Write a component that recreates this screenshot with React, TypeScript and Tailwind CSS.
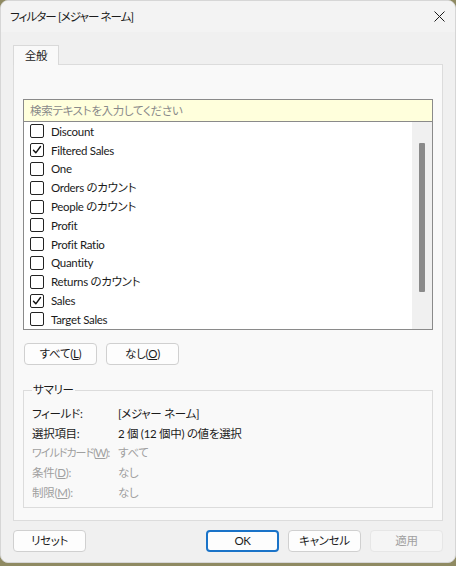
import React from 'react'

const font = "font-['Lato','Noto_Sans_CJK_JP',sans-serif] [font-feature-settings:'palt'] tracking-[-0.3px]"

const items = [
  { name: 'Discount', checked: false },
  { name: 'Filtered Sales', checked: true },
  { name: 'One', checked: false },
  { name: 'Orders のカウント', checked: false },
  { name: 'People のカウント', checked: false },
  { name: 'Profit', checked: false },
  { name: 'Profit Ratio', checked: false },
  { name: 'Quantity', checked: false },
  { name: 'Returns のカウント', checked: false },
  { name: 'Sales', checked: true },
  { name: 'Target Sales', checked: false },
]

function Checkbox({ checked }: { checked: boolean }) {
  return (
    <div className="w-[14px] h-[14px] shrink-0 border border-[#222] rounded-[2px] bg-white flex items-center justify-center">
      {checked && (
        <svg width="10" height="10" viewBox="0 0 10 10" fill="none">
          <path d="M1.5 5.2 L3.8 7.8 L8.5 1.5" stroke="#111" strokeWidth="1.4" strokeLinecap="round" strokeLinejoin="round" />
        </svg>
      )}
    </div>
  )
}

function Btn({ children, variant = 'normal', className = '' }: { children: React.ReactNode; variant?: 'normal' | 'primary' | 'disabled'; className?: string }) {
  const styles = {
    normal: 'bg-[#fdfdfd] border border-[#d0d0d0] text-[#1b1b1b]',
    primary: 'bg-[#fdfdfd] border-2 border-[#1a73c8] text-[#1b1b1b]',
    disabled: 'bg-[#f5f5f5] border border-[#e6e6e6] text-[#a0a0a0]',
  }[variant]
  return (
    <div className={`w-[73px] h-[22px] rounded-[4px] flex items-center justify-center text-[11.5px] ${styles} ${className}`}>
      {children}
    </div>
  )
}

export default function App() {
  return (
    <div className={`w-[456px] h-[566px] bg-[#8f8a62] ${font}`}>
      <div className="w-[456px] h-[563px] bg-[#f0f0f0] rounded-[8px] border border-[#d6d6d6] flex flex-col overflow-hidden">
        {/* title bar */}
        <div className="h-[31px] shrink-0 flex items-center justify-between pl-[9px] pr-[10px] bg-[#f3f3f3]">
          <span className="text-[11.5px] tracking-[-0.9px] text-[#1b1b1b]">フィルター [メジャー ネーム]</span>
          <svg width="11" height="11" viewBox="0 0 11 11">
            <path d="M0.5 0.5 L10.5 10.5 M10.5 0.5 L0.5 10.5" stroke="#1b1b1b" strokeWidth="1" />
          </svg>
        </div>

        <div className="flex-1 flex flex-col px-[12px]">
          {/* tab */}
          <div className="mt-[13px] flex">
            <div className="w-[46px] h-[20px] bg-[#f9f9f9] border border-b-0 border-[#d9d9d9] flex items-center justify-center text-[11.5px] text-[#1b1b1b] relative z-10 -mb-px">
              全般
            </div>
          </div>

          {/* panel */}
          <div className="h-[457px] bg-[#f9f9f9] border border-[#dcdcdc] pt-[34px] px-[9px] flex flex-col">
            {/* search */}
            <div className="h-[23px] bg-[#ffffdc] border border-[#8a8a8a] flex items-center px-[6px] text-[11.5px] text-[#8a8a8a]">
              検索テキストを入力してください
            </div>
            {/* list */}
            <div className="h-[208px] bg-white border border-t-0 border-[#8a8a8a] flex">
              <div className="flex-1 flex flex-col pl-[6px]">
                {items.map((it) => (
                  <div key={it.name} className="h-[18.8px] flex items-center gap-[7px] text-[11.5px] text-[#1b1b1b]">
                    <Checkbox checked={it.checked} />
                    <span>{it.name}</span>
                  </div>
                ))}
              </div>
              <div className="w-[20px] bg-[#f0f0f0] flex justify-center pt-[21px]">
                <div className="w-[6px] h-[149px] bg-[#8a8a8a] rounded-[1px]" />
              </div>
            </div>

            {/* select buttons */}
            <div className="mt-[13px] flex gap-[9px] pl-px">
              <Btn>
                すべて(<span className="underline">L</span>)
              </Btn>
              <Btn>
                なし(<span className="underline">O</span>)
              </Btn>
            </div>

            {/* summary */}
            <fieldset className="mt-[17px] h-[126px] border border-[#dcdcdc] px-[8px] pt-[8px]">
              <legend className="px-px text-[11.5px] text-[#1b1b1b] leading-[16px]">サマリー</legend>
              <div className="grid grid-cols-[86px_1fr] gap-y-[3.7px] text-[11.5px] leading-[16px] whitespace-nowrap">
                <span className="text-[#1b1b1b]">フィールド:</span>
                <span className="text-[#1b1b1b]">[メジャー ネーム]</span>
                <span className="text-[#1b1b1b]">選択項目:</span>
                <span className="text-[#1b1b1b]">2 個 (12 個中) の値を選択</span>
                <span className="text-[#a0a0a0] text-[11px] tracking-[-1px]">
                  ワイルドカード(<span className="underline">W</span>):
                </span>
                <span className="text-[#a0a0a0]">すべて</span>
                <span className="text-[#a0a0a0]">
                  条件(<span className="underline">D</span>):
                </span>
                <span className="text-[#a0a0a0]">なし</span>
                <span className="text-[#a0a0a0]">
                  制限(<span className="underline">M</span>):
                </span>
                <span className="text-[#a0a0a0]">なし</span>
              </div>
            </fieldset>
          </div>

          {/* footer */}
          <div className="mt-[9px] flex items-center">
            <Btn>リセット</Btn>
            <div className="flex-1" />
            <div className="flex gap-[9px]">
              <Btn variant="primary">OK</Btn>
              <Btn>キャンセル</Btn>
              <Btn variant="disabled">適用</Btn>
            </div>
          </div>
        </div>
      </div>
    </div>
  )
}
